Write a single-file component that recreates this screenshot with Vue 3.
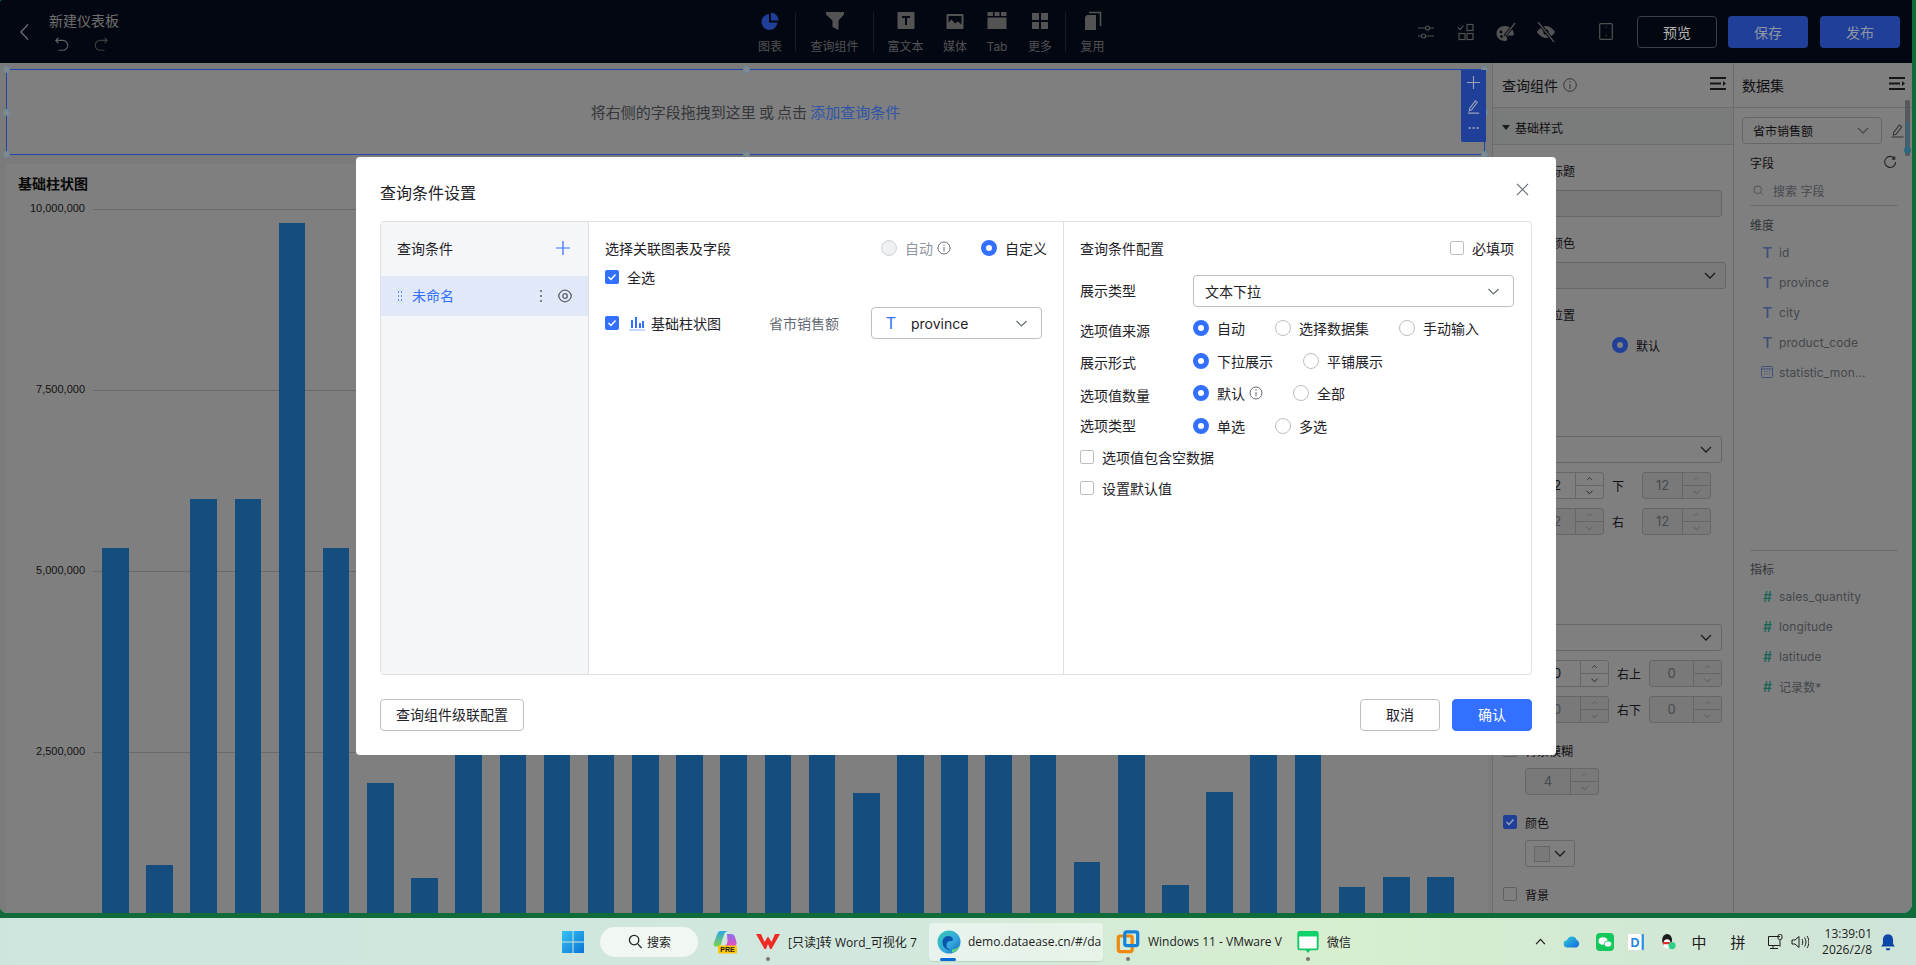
<script setup>
const bars = [385.5, 68, 434, 434, 710, 385.5, 150, 55, 300, 320, 300, 320, 300, 320, 300, 320, 300, 140, 320, 300, 320, 300, 71, 320, 48, 141, 320, 320, 46, 56, 56]
const axis = ['10,000,000', '7,500,000', '5,000,000', '2,500,000']
const handles = ['tl', 'tc', 'tr', 'ml', 'mr', 'bl', 'bc', 'br']
const dims = ['id', 'province', 'city', 'product_code']
const measures = ['sales_quantity', 'longitude', 'latitude', '记录数*']
const options = [
  { label: '选项值来源', cls: 'r1', lab: 'l3', items: [{ t: '自动', on: true }, { t: '选择数据集' }, { t: '手动输入' }] },
  { label: '展示形式', cls: 'r2', lab: 'l2', items: [{ t: '下拉展示', on: true }, { t: '平铺展示' }] },
  { label: '选项值数量', cls: 'r3', lab: 'l3', items: [{ t: '默认', on: true, info: true }, { t: '全部' }] },
  { label: '选项类型', cls: 'r4', lab: 'l0', items: [{ t: '单选', on: true }, { t: '多选' }] }
]
const marginRows = [
  { a: '上', av: '12', b: '下', bv: '12', active: true },
  { a: '左', av: '12', b: '右', bv: '12', active: false }
]
const cornerRows = [
  { a: '左上', av: '0', b: '右上', bv: '0', active: true },
  { a: '左下', av: '0', b: '右下', bv: '0', active: false }
]
</script>

<template>
  <div class="screen">
    <div class="window">
      <div class="frame">
        <header class="topbar">
          <div class="top-left">
            <svg class="back" viewBox="0 0 12 20"><path d="M10 1.5 2 10l8 8.5" /></svg>
            <div class="title-block">
              <div class="doc-title">新建仪表板</div>
              <div class="history">
                <svg viewBox="0 0 18 18"><path d="M5 2 2 5l3 3M2.5 5H10a5 5 0 0 1 0 11H5" /></svg>
                <svg class="faint" viewBox="0 0 18 18"><path d="M13 2l3 3-3 3M15.5 5H8a5 5 0 0 0 0 11h5" /></svg>
              </div>
            </div>
          </div>
          <nav class="tools">
            <div class="tool t1">
              <svg class="tool-ico" viewBox="0 0 20 20"><path class="pie-a" d="M9 3a8 8 0 1 0 8.500 8.500H9z" /><path class="pie-a" d="M11 1.500a8 8 0 0 1 7.500 8H11z" /></svg>
              <span>图表</span>
            </div>
            <div class="tool t2 sep">
              <svg class="tool-ico" viewBox="0 0 20 20"><path class="fill" d="M1 1h18v2.500l-5.500 6V19L7.500 16V9.500L1 3.500z" /></svg>
              <span>查询组件</span>
            </div>
            <div class="tool t3 sep">
              <svg class="tool-ico" viewBox="0 0 20 20"><rect class="fill" x="1.500" y="1" width="17" height="17" rx="1" /><path class="cut" d="M6 6h8M10 6v8" /></svg>
              <span>富文本</span>
            </div>
            <div class="tool t4">
              <svg class="tool-ico" viewBox="0 0 20 20"><rect class="fill" x="1.500" y="3" width="17" height="15" rx="1" /><path class="cut-fill" d="M3.500 5h13v8.500l-3.500-3-3 2-3.500-4-3 3z" /></svg>
              <span>媒体</span>
            </div>
            <div class="tool t5">
              <svg class="tool-ico" viewBox="0 0 20 20"><path class="fill" d="M.5 1h5.500v4H.5zM7.500 1h5v4h-5zM14 1h5.500v4H14zM.5 6.500h19V18H.5z" /></svg>
              <span>Tab</span>
            </div>
            <div class="tool t6">
              <svg class="tool-ico" viewBox="0 0 20 20"><rect class="fill" x="2" y="2" width="7" height="7" /><rect class="fill" x="11" y="2" width="7" height="7" /><rect class="fill" x="2" y="11" width="7" height="7" /><rect class="fill" x="11" y="11" width="7" height="7" /></svg>
              <span>更多</span>
            </div>
            <div class="tool t7 sep">
              <svg class="tool-ico" viewBox="0 0 20 20"><path class="fill" d="M2 6l2-2h9v15H2z" /><path class="line" d="M6 1.500h11.500V15" /></svg>
              <span>复用</span>
            </div>
          </nav>
          <div class="top-right">
            <svg class="ri" viewBox="0 0 20 20"><path d="M2 6h7.500M13.500 6H18M2 14h3.500M9.500 14H18" /><circle cx="11.500" cy="6" r="2" /><circle cx="7.500" cy="14" r="2" /></svg>
            <svg class="ri" viewBox="0 0 20 20"><path d="m2 5.500 2.200 2.200 3.300-4.200" /><rect x="11" y="2.500" width="6" height="6" /><rect x="3" y="11.500" width="6" height="6" /><rect x="11" y="11.500" width="6" height="6" /></svg>
            <svg class="ri" viewBox="0 0 20 20"><path class="fill" d="M9 4C4 4 .5 7 .5 11.500S4.500 19 9 19c2.500 0 2.500-1.800 2-3-.5-1.500.5-2.500 2.500-2.500h4C19 8.500 14 4 9 4z" /><circle class="hole" cx="5" cy="10" r="1.400" /><circle class="hole" cx="5.500" cy="14.500" r="1.400" /><path class="hole-line" d="M9 14 17.500 3" /><path class="brush" d="M9.500 13.500 19 1" /></svg>
            <svg class="ri" viewBox="0 0 20 20"><path class="fill" d="M1 10s3.500-6 9-6 9 6 9 6-3.500 6-9 6-9-6-9-6z" /><circle class="hole" cx="10" cy="10" r="2.600" /><path class="hole-line" d="M3 1 17 19" /><path class="brush" d="M2 0 18 20" /></svg>
            <svg class="ri phone" viewBox="0 0 14 17"><rect x=".7" y=".7" width="12.600" height="15.600" rx="1" /><path d="M7 3.500v1M7 12v1" /></svg>
            <button class="btn-preview">预览</button>
            <button class="btn-blue save">保存</button>
            <button class="btn-blue publish">发布</button>
          </div>
        </header>

        <main class="workspace">
          <section class="canvas">
            <div class="query-box">
              <span class="hint">将右侧的字段拖拽到这里 或 点击 <a class="link">添加查询条件</a></span>
              <i v-for="h in handles" :key="h" class="handle" :class="h"></i>
              <div class="box-actions">
                <svg viewBox="0 0 16 16"><path d="M8 1v14M1 8h14" /></svg>
                <svg viewBox="0 0 16 16"><path d="m4 10 6-8 2 1.500-6 8-2.500 1zM2 15h12" /></svg>
                <span class="dots">···</span>
              </div>
            </div>
            <article class="chart-card">
              <h3>基础柱状图</h3>
              <div class="chart-body">
                <div class="y-axis">
                  <div v-for="a in axis" :key="a" class="y-label">{{ a }}</div>
                </div>
                <div class="plot">
                  <div v-for="(b, i) in bars" :key="i" class="bar" :style="{ height: b + 'px' }"></div>
                </div>
              </div>
            </article>
          </section>

          <aside class="style-panel">
            <div class="panel-head">
              <span class="panel-title">查询组件</span>
              <svg class="info big" viewBox="0 0 14 14"><circle cx="7" cy="7" r="6.300" /><path d="M7 6v5M7 3.200v1.300" /></svg>
              <svg class="menu" viewBox="0 0 16 13"><path d="M0 1h16M0 6.500h11M0 12h16" /><path class="tri" d="m13 4 3 2.500L13 9z" /></svg>
            </div>
            <div class="band"><i class="caret"></i>基础样式</div>
            <div class="field-label m1">查询组件标题</div>
            <div class="text-input"></div>
            <div class="field-label m2">组件标题颜色</div>
            <div class="select-box wide"><svg class="chev" viewBox="0 0 12 7"><path d="m1 1 5 5 5-5" /></svg></div>
            <div class="field-label m2">组件标题位置</div>
            <div class="side-radio"><i class="radio on"></i><span>默认</span></div>
            <div class="select-box m3"><svg class="chev" viewBox="0 0 12 7"><path d="m1 1 5 5 5-5" /></svg></div>
            <div v-for="r in marginRows" :key="r.a" class="num-row">
              <span class="nl first">{{ r.a }}</span>
              <div class="num n-a" :class="{ disabled: !r.active }">
                <span class="nv">{{ r.av }}</span>
                <span class="spin"><svg viewBox="0 0 10 6"><path d="m1 5 4-4 4 4" /></svg><svg viewBox="0 0 10 6"><path d="m1 1 4 4 4-4" /></svg></span>
              </div>
              <span class="nl second">{{ r.b }}</span>
              <div class="num n-b disabled">
                <span class="nv">{{ r.bv }}</span>
                <span class="spin"><svg viewBox="0 0 10 6"><path d="m1 5 4-4 4 4" /></svg><svg viewBox="0 0 10 6"><path d="m1 1 4 4 4-4" /></svg></span>
              </div>
            </div>
            <div class="select-box m4"><svg class="chev" viewBox="0 0 12 7"><path d="m1 1 5 5 5-5" /></svg></div>
            <div v-for="r in cornerRows" :key="r.a" class="num-row">
              <span class="nl first">{{ r.a }}</span>
              <div class="num n-c" :class="{ disabled: !r.active }">
                <span class="nv">{{ r.av }}</span>
                <span class="spin"><svg viewBox="0 0 10 6"><path d="m1 5 4-4 4 4" /></svg><svg viewBox="0 0 10 6"><path d="m1 1 4 4 4-4" /></svg></span>
              </div>
              <span class="nl second2">{{ r.b }}</span>
              <div class="num n-d disabled">
                <span class="nv">{{ r.bv }}</span>
                <span class="spin"><svg viewBox="0 0 10 6"><path d="m1 5 4-4 4 4" /></svg><svg viewBox="0 0 10 6"><path d="m1 1 4 4 4-4" /></svg></span>
              </div>
            </div>
            <label class="check-row"><i class="check"></i>背景模糊</label>
            <div class="num n-e disabled">
              <span class="nv">4</span>
              <span class="spin"><svg viewBox="0 0 10 6"><path d="m1 5 4-4 4 4" /></svg><svg viewBox="0 0 10 6"><path d="m1 1 4 4 4-4" /></svg></span>
            </div>
            <label class="check-row"><i class="check on"><svg viewBox="0 0 14 14"><path d="m3.500 7 2.500 2.500 4.500-5" /></svg></i>颜色</label>
            <div class="picker"><i class="swatch"></i><svg class="chev" viewBox="0 0 12 7"><path d="m1 1 5 5 5-5" /></svg></div>
            <label class="check-row"><i class="check"></i>背景</label>
          </aside>

          <aside class="data-panel">
            <div class="panel-head">
              <span class="panel-title">数据集</span>
              <svg class="menu" viewBox="0 0 16 13"><path d="M0 1h16M0 6.500h11M0 12h16" /><path class="tri" d="m13 4 3 2.500L13 9z" /></svg>
            </div>
            <div class="ds-row">
              <div class="ds-select">省市销售额<svg class="chev lite" viewBox="0 0 12 7"><path d="m1 1 5 5 5-5" /></svg></div>
              <svg class="pencil" viewBox="0 0 16 16"><path d="m4 10 6-8 2.500 2-6 8-3 .8zM1.500 15h13" /></svg>
            </div>
            <div class="fields-head">字段<svg class="refresh" viewBox="0 0 16 16"><path d="M13.500 4.500A6.300 6.300 0 1 0 14.500 8" /><path class="tri" d="M14 1v4.500H9.500z" /></svg></div>
            <div class="search"><svg viewBox="0 0 14 14"><circle cx="6" cy="6" r="4.800" /><path d="m9.500 9.500 3 3" /></svg>搜索 字段</div>
            <div class="rule"></div>
            <div class="group g1">维度</div>
            <ul class="field-list">
              <li v-for="d in dims" :key="d"><b class="tic">T</b><span>{{ d }}</span></li>
              <li>
                <svg class="cal" viewBox="0 0 12 12"><rect x=".5" y=".5" width="11" height="11" rx="1" /><path d="M.5 3h11M3 5.500h1M5.500 5.500h1M8 5.500h1M3 8h1M5.500 8h1M8 8h1" /></svg>
                <span>statistic_mon...</span>
              </li>
            </ul>
            <div class="rule r2"></div>
            <div class="group g2">指标</div>
            <ul class="field-list">
              <li v-for="m in measures" :key="m"><b class="hash">#</b><span>{{ m }}</span></li>
            </ul>
            <svg class="slider" viewBox="0 0 8 60"><rect x="1" y="0" width="5" height="56" rx="2" /><path d="M3.500 22v28" /><circle cx="3.500" cy="50" r="3.500" /></svg>
          </aside>
        </main>

        <div class="mask">
          <section class="modal">
            <header class="modal-head">
              <h2>查询条件设置</h2>
              <svg class="close" viewBox="0 0 14 14"><path d="m1 1 12 12M13 1 1 13" /></svg>
            </header>
            <div class="modal-body">
              <div class="col-left">
                <div class="col-left-head">查询条件<svg class="plus" viewBox="0 0 14 14"><path d="M7 0v14M0 7h14" /></svg></div>
                <div class="cond active">
                  <svg class="drag" viewBox="0 0 6 10"><path d="M1 1h1M4 1h1M1 5h1M4 5h1M1 9h1M4 9h1" /></svg>
                  <span>未命名</span>
                  <svg class="kebab" viewBox="0 0 4 14"><circle cx="2" cy="2" r="1" /><circle cx="2" cy="7" r="1" /><circle cx="2" cy="12" r="1" /></svg>
                  <svg class="eye" viewBox="0 0 14 14"><path d="M7 1.200c3 0 6 2.500 6.300 5.800-.3 3.300-3.300 5.800-6.300 5.800S1 10.300.7 7C1 3.700 4 1.200 7 1.200z" /><circle cx="7" cy="7" r="2.300" /></svg>
                </div>
              </div>
              <div class="col-mid">
                <div class="mid-head">
                  <span>选择关联图表及字段</span>
                  <div class="mid-radios">
                    <span class="opt muted"><i class="radio off"></i>自动<svg class="info" viewBox="0 0 14 14"><circle cx="7" cy="7" r="6" /><path d="M7 6v4.500M7 3.500v1.300" /></svg></span>
                    <span class="opt"><i class="radio on"></i>自定义</span>
                  </div>
                </div>
                <label class="mid-all"><i class="check on"><svg viewBox="0 0 14 14"><path d="m3.500 7 2.500 2.500 4.500-5" /></svg></i>全选</label>
                <div class="mid-row">
                  <i class="check on"><svg viewBox="0 0 14 14"><path d="m3.500 7 2.500 2.500 4.500-5" /></svg></i>
                  <svg class="bar-ico" viewBox="0 0 18 16"><path d="M4 5v8M8 2v11M12 8v5M15 6v7" /><path class="base" d="M1 15h16" /></svg>
                  <span class="chart-name">基础柱状图</span>
                  <span class="ds-name">省市销售额</span>
                  <div class="field-select"><b>T</b><span>province</span><svg class="chev lite2" viewBox="0 0 12 7"><path d="m1 1 5 5 5-5" /></svg></div>
                </div>
              </div>
              <div class="col-right">
                <div class="right-head">
                  <span>查询条件配置</span>
                  <label class="req"><i class="check"></i>必填项</label>
                </div>
                <div class="type-row">
                  <span class="lbl">展示类型</span>
                  <div class="type-select">文本下拉<svg class="chev lite2" viewBox="0 0 12 7"><path d="m1 1 5 5 5-5" /></svg></div>
                </div>
                <div v-for="o in options" :key="o.label" class="opt-row" :class="o.cls">
                  <span class="lbl" :class="o.lab">{{ o.label }}</span>
                  <div class="opt-list">
                    <span v-for="it in o.items" :key="it.t" class="opt">
                      <i class="radio" :class="{ on: it.on }"></i>{{ it.t }}
                      <svg v-if="it.info" class="info" viewBox="0 0 14 14"><circle cx="7" cy="7" r="6" /><path d="M7 6v4.500M7 3.500v1.300" /></svg>
                    </span>
                  </div>
                </div>
                <label class="cb-row"><i class="check"></i>选项值包含空数据</label>
                <label class="cb-row"><i class="check"></i>设置默认值</label>
              </div>
            </div>
            <footer class="modal-foot">
              <button class="btn">查询组件级联配置</button>
              <div class="foot-right">
                <button class="btn wide-btn">取消</button>
                <button class="btn primary wide-btn">确认</button>
              </div>
            </footer>
          </section>
        </div>
      </div>
    </div>

    <footer class="taskbar">
      <svg class="app win" viewBox="0 0 24 24">
        <defs><linearGradient id="wing" x1="0" y1="0" x2="1" y2="1"><stop offset="0" stop-color="#35c4f5" /><stop offset="1" stop-color="#0a74d6" /></linearGradient></defs>
        <path fill="url(#wing)" d="M1 1h10.500v10.500H1zM12.500 1H23v10.500H12.500zM1 12.500h10.500V23H1zM12.500 12.500H23V23H12.500z" />
      </svg>
      <div class="tb-search">
        <svg viewBox="0 0 16 16"><circle cx="6.500" cy="6.500" r="5" /><path d="m10.500 10.500 4 4.500" /></svg>
        <span>搜索</span>
      </div>
      <svg class="app copilot" viewBox="0 0 24 24">
        <defs>
          <linearGradient id="copa" x1="0" y1="0" x2="0" y2="1"><stop offset="0" stop-color="#2aa6e8" /><stop offset="1" stop-color="#7fd24a" /></linearGradient>
          <linearGradient id="copb" x1="0" y1="0" x2="0" y2="1"><stop offset="0" stop-color="#8a6ff0" /><stop offset="1" stop-color="#e84fb8" /></linearGradient>
        </defs>
        <path fill="url(#copa)" d="M8 1h7c-2.500.5-3.500 2-4.500 5L8 14c-.7 2-1.800 2.500-3.500 2.500H2.500C1 16.500.3 15 .7 13.500L4 4.500C4.800 2 6 1 8 1z" />
        <path fill="url(#copb)" d="M14 4h4c2 0 3.500 1 4.200 3.500l1.300 5c.5 1.800-.5 3.500-2.500 3.500h-9c1.500-1 2-2.500 2.500-4.500z" />
        <rect x="5" y="15.500" width="19" height="8" rx="1.500" fill="#fdc60a" />
        <text x="14.500" y="22" text-anchor="middle" class="pre">PRE</text>
      </svg>
      <div class="task wps has-dot">
        <svg class="app" viewBox="0 -4 24 24"><path d="M0 0h5l3.500 8L12 2.500 15.500 8 19 0h5l-8.500 15H14l-2-5-2 5H8.500zM5.500 3.500" fill="#ee2a24" /></svg>
        <span>[只读]转 Word_可视化 7</span>
      </div>
      <div class="task edge active-tab">
        <svg class="app" viewBox="0 0 24 24">
          <defs>
            <linearGradient id="edg" x1="0" y1="0" x2="1" y2="1"><stop offset="0" stop-color="#36c9b0" /><stop offset=".6" stop-color="#35a7e0" /><stop offset="1" stop-color="#0d5fb8" /></linearGradient>
          </defs>
          <circle cx="12" cy="12" r="11.500" fill="url(#edg)" />
          <path d="M16 10c0-2.500-2-4-5-4-3.500 0-5.500 3-5.500 6.500 0 4.500 4 8 8.500 7.500-3-.5-5-3-4.500-5.500.5-2 2-3.500 3.500-3.500 1.500 0 3-.3 3-1z" fill="#0c55ad" />
          <path d="M15 22.500c4-.5 7-4 8-8-1.500 3-4.500 5-8 5z" fill="#5fdc7a" />
        </svg>
        <span>demo.dataease.cn/#/da</span>
        <i class="underline"></i>
      </div>
      <div class="task vm has-dot">
        <svg class="app" viewBox="0 0 24 26"><rect x="1.500" y="6.500" width="15" height="17" rx="2" fill="none" stroke="#ee8a12" stroke-width="3.500" /><rect x="8.500" y="2" width="14" height="15" rx="2" fill="none" stroke="#1584d8" stroke-width="3.500" /></svg>
        <span>Windows 11 - VMware V</span>
      </div>
      <div class="task wx has-dot">
        <svg class="app" viewBox="0 0 24 26"><rect x="1.500" y="2" width="21" height="19" rx="1.500" fill="#fff" stroke="#10c866" stroke-width="2" /><path d="M1 2h22v5H1z" fill="#10d46b" /><path d="m9 21 3 4 3-4z" fill="#10c866" /></svg>
        <span>微信</span>
      </div>
      <div class="tray">
        <svg class="t-chev" viewBox="0 0 12 8"><path d="m1 7 5-5.500L11 7" /></svg>
        <svg class="t-ico" viewBox="0 0 20 14">
          <defs><linearGradient id="cld" x1="0" y1="0" x2="1" y2="1"><stop offset="0" stop-color="#2fd0d8" /><stop offset="1" stop-color="#1466dd" /></linearGradient></defs>
          <path fill="url(#cld)" d="M5 13a4 4 0 0 1-.5-8A5.500 5.500 0 0 1 15 4.500 4.500 4.500 0 0 1 15 13z" />
        </svg>
        <svg class="t-ico" viewBox="0 0 18 18"><rect width="18" height="18" rx="4" fill="#12c85b" /><ellipse cx="7" cy="8" rx="4.500" ry="3.700" fill="#fff" /><ellipse cx="12" cy="11" rx="3.800" ry="3.100" fill="#fff" stroke="#12c85b" stroke-width=".8" /></svg>
        <svg class="t-ico" viewBox="0 0 16 16"><rect x="1" y="1" width="14" height="14" fill="#fff" /><path d="M13 1h2v14h-2z" fill="#2a8be6" /><text x="7" y="12" text-anchor="middle" class="ding">D</text></svg>
        <svg class="t-ico" viewBox="0 0 18 20"><ellipse cx="8" cy="8" rx="5.500" ry="7" fill="#1c1c1c" /><ellipse cx="8" cy="12" rx="4" ry="5" fill="#fff" /><path d="M3 10h10l-1 2.500H4z" fill="#e22b2b" /><circle cx="13.500" cy="14" r="4" fill="#2fd08a" /></svg>
        <span class="ime">中</span>
        <span class="ime">拼</span>
        <svg class="t-ico net" viewBox="0 0 18 17"><path d="M13 3H1.500v9h11M6 12v3M3 15h8" /><rect x="11" y="1" width="4" height="5" rx="1.500" /><path d="M13 6v7" /></svg>
        <svg class="t-ico net" viewBox="0 0 18 14"><path d="M1 5h3l4-3.500v11L4 9H1zM11 4c1 1.500 1 4.500 0 6M13.500 2.500c2 2.500 2 6.500 0 9M16 1c2.500 3.500 2.500 8.500 0 12" /></svg>
        <div class="clock"><div>13:39:01</div><div>2026/2/8</div></div>
        <svg class="t-ico" viewBox="0 0 14 16"><path d="M7 1c-3 0-4.500 2.500-4.500 5v3.500L1 12h12l-1.500-2.500V6C11.500 3.500 10 1 7 1z" fill="#0d47a8" /><path d="M5 13.500a2 2 0 0 0 4 0z" fill="#0d47a8" /></svg>
      </div>
    </footer>
  </div>
</template>

<style>
html, body { margin: 0; overflow: hidden; background: #cfe6dc; }
</style>

<style scoped>
* { box-sizing: border-box; }
.screen {
  width: 1916px; height: 965px; display: flex; flex-direction: column; overflow: hidden;
  font-family: Inter, "Noto Sans CJK SC", sans-serif; font-size: 14px; color: #1f2329;
}
i { display: block; font-style: normal; flex: none; }
svg { display: block; flex: none; }
ul { list-style: none; margin: 0; padding: 0; }
button { font: inherit; cursor: pointer; }

.window { height: 918px; background: #0f6b3a; padding: 0 4px 5px 0; flex: none; }
.frame {
  position: relative; width: 1912px; height: 913px; overflow: hidden;
  border-radius: 3px 0 9px 7px; display: flex; flex-direction: column;
}

/* top bar */
.topbar { height: 63px; flex: none; background: #060e22; display: flex; align-items: center; color: #e6e6e6; }
.top-left { width: 745px; display: flex; align-items: center; padding-left: 19px; flex: none; }
.back { width: 11px; height: 18px; margin-right: 19px; fill: none; stroke: #e8e8e8; stroke-width: 1.4; }
.doc-title { font-size: 14px; line-height: 20px; margin-top: -1px; color: #dcdcdc; }
.history { display: flex; gap: 23px; margin-top: 5px; margin-left: 5px; }
.history svg { width: 16px; height: 16px; fill: none; stroke: #c0c0c0; stroke-width: 1.3; }
.history svg.faint { stroke: #7a7a7a; }
.tools { display: flex; height: 40px; flex: none; }
.tool { height: 40px; display: flex; flex-direction: column; align-items: center; font-size: 12px; line-height: 14px; color: #a0a0a6; }
.tool-ico { width: 20px; height: 20px; margin: -1px 0 9px; }
.tool.sep { border-left: 1px solid #323a4e; }
.t1 { width: 50px; } .t2 { width: 78px; } .t3 { width: 64px; } .t4 { width: 36px; }
.t5 { width: 48px; } .t6 { width: 44px; padding-right: 6px; } .t7 { width: 54px; }
.t1 .tool-ico { position: relative; z-index: 1; }
.pie-a { fill: #1f3f98; }
.fill { fill: #a6a6a6; stroke: none; }
.cut { stroke: #060e22; stroke-width: 2; fill: none; }
.cut-fill { fill: #060e22; }
.line { stroke: #a6a6a6; stroke-width: 1.6; fill: none; }
.top-right { display: flex; align-items: center; margin-left: auto; }
.ri { width: 20px; height: 20px; margin-right: 20px; fill: none; stroke: #a0a0a0; stroke-width: 1.2; }
.ri .fill { stroke: none; }
.ri .hole { fill: #060e22; stroke: none; }
.ri .hole-line { stroke: #060e22; stroke-width: 3.200; }
.ri .brush { stroke-width: 1.300; }
.ri.phone { width: 14px; height: 17px; margin: 0 24px 0 23px; }
.btn-preview, .btn-blue { width: 80px; height: 32px; border-radius: 4px; font-size: 14px; position: relative; z-index: 1; }
.btn-preview { background: #03070f; border: 1px solid #3a3f48; color: #b4b4b4; margin-right: 11px; }
.btn-blue { background: #1f3f98; border: 0; color: #8f95a5; }
.save { margin-right: 12px; }
.publish { margin-right: 12px; }

/* workspace */
.workspace { flex: 1; display: flex; min-height: 0; }
.canvas { width: 1492px; flex: none; background: #f6f7f8; padding: 6px 0 0 6px; overflow: hidden; }
.query-box {
  position: relative; width: 1479px; height: 86px; background: #fff; border: 1px solid transparent; padding-bottom: 2px;
  display: flex; align-items: center; justify-content: center; font-size: 15px; color: #6a6e76;
}
.query-box::before { content: ""; position: absolute; inset: -1px; border: 1px solid #2246a6; z-index: 1; pointer-events: none; }
.hint { word-spacing: -1px; }
.link { color: #2f55a8; position: relative; z-index: 1; }
.handle { position: absolute; width: 7px; height: 7px; border-radius: 50%; border: 1px solid #5e8fa8; background: #888; z-index: 1; }
.tl { left: -4px; top: -4px; } .tc { left: 736px; top: -4px; } .tr { right: -4px; top: -4px; }
.ml { left: -4px; top: 39px; } .mr { right: -4px; top: 39px; }
.bl { left: -4px; bottom: -4px; } .bc { left: 736px; bottom: -4px; } .br { right: -4px; bottom: -4px; }
.box-actions {
  position: absolute; top: 0; right: -2px; width: 25px; height: 72px; background: #1f3f98; border-radius: 0 0 0 2px; z-index: 2;
  display: flex; flex-direction: column; align-items: center; padding-top: 5px; gap: 9px; color: #9aa2b8;
}
.box-actions svg { width: 15px; height: 15px; fill: none; stroke: #9aa2b8; stroke-width: 1.2; }
.dots { font-size: 12px; line-height: 10px; letter-spacing: 0; font-weight: 700; }

.chart-card { margin-top: 9px; width: 1482px; height: 780px; background: #fff; padding: 12px 0 0 12px; overflow: hidden; }
.chart-card h3 { margin: 0; font-size: 14px; line-height: 16px; font-weight: 700; color: #111; }
.chart-body { display: flex; margin: 17px 0 0 -12px; }
.y-axis { width: 87px; flex: none; margin-top: -1px; }
.y-label { height: 181px; text-align: right; padding-right: 8px; font: 11px/0 "Liberation Sans", sans-serif; color: #2a2a2a; }
.plot {
  width: 1375px; height: 724px; display: flex; align-items: flex-end; gap: 17.58px; padding-left: 9px;
  background: repeating-linear-gradient(to bottom, #d4d4d4 0, #d4d4d4 1px, transparent 1px, transparent 181px);
}
.bar { width: 26.6px; flex: none; background: #2c9bff; }

/* side panels */
.style-panel { width: 241px; flex: none; background: #fff; border-left: 1px solid #d8d8d8; overflow: hidden; font-size: 12px; }
.panel-head { height: 45px; display: flex; align-items: center; border-bottom: 1px solid #d6d8da; position: relative; }
.panel-title { font-size: 14px; margin-left: 9px; }
.info { width: 14px; height: 14px; fill: none; stroke: #646a73; stroke-width: 1; margin-left: 4px; }
.info.big { margin-left: 5px; }
.menu { position: absolute; right: 7px; top: 14px; width: 16px; height: 13px; fill: none; stroke: #2a2d32; stroke-width: 2; }
.menu .tri { fill: #2a2d32; stroke: none; }
.band { height: 37px; background: #f5f6f7; border-bottom: 1px solid #d6d8da; display: flex; align-items: center; padding: 2px 0 0 9px; font-size: 12px; }
.caret { width: 0; height: 0; border: 4px solid transparent; border-top: 5px solid #33363a; border-bottom: 0; margin-right: 5px; }
.field-label { margin-left: 10px; line-height: 18px; }
.m1 { margin-top: 18px; }
.m2 { margin-top: 18px; }
.text-input { width: 229px; height: 27px; margin: 9px 0 0 0; background: #f0f1f1; border: 1px solid #c9cccf; border-radius: 3px; }
.select-box { width: 229px; height: 27px; margin-top: 9px; border: 1px solid #c9cccf; border-radius: 3px; display: flex; align-items: center; justify-content: flex-end; padding-right: 9px; }
.select-box.wide { width: 233px; padding-right: 9px; background: #f5f5f5; }
.m3 { margin-top: 83px; }
.m4 { margin-top: 89px; }
.chev { width: 12px; height: 7px; fill: none; stroke: #33363a; stroke-width: 1.3; }
.chev.lite { stroke: #8f959e; margin-left: auto; }
.chev.lite2 { stroke: #646a73; stroke-width: 1.1; width: 13px; }
.side-radio { display: flex; align-items: center; gap: 8px; height: 16px; margin: 12px 0 0 119px; }
.side-radio .radio.on { position: relative; z-index: 1; border-color: #1f3f98; background: #808080; }

.num-row { display: flex; align-items: center; height: 27px; margin-top: 9px; }
.nl.first { margin-left: 10px; width: 30px; flex: none; }
.nl.second { margin-left: 8px; width: 30px; flex: none; }
.nl.second2 { margin-left: 8px; width: 32px; flex: none; }
.num { height: 27px; display: flex; border: 1px solid #c9cccf; border-radius: 3px; background: #fff; flex: none; color: #1f2329; }
.num .nv { flex: 1; text-align: center; font-size: 13px; line-height: 25px; }
.spin { width: 28px; border-left: 1px solid #c9cccf; display: flex; flex-direction: column; flex: none; }
.spin svg { width: 100%; height: 50%; padding: 4px 9px; fill: none; stroke: #33363a; stroke-width: 1.2; }
.spin svg:first-child { border-bottom: 1px solid #c9cccf; }
.num.disabled { background: #f2f3f3; color: #8f959e; }
.num.disabled .spin svg { stroke: #a8abaf; }
.n-a { width: 71px; margin-right: 0; }
.n-b { width: 69px; }
.n-c { width: 76px; margin-left: 0; }
.n-d { width: 73px; }
.check-row { display: flex; align-items: center; gap: 8px; height: 18px; margin: 18px 0 0 10px; }
.check-row .check.on { position: relative; z-index: 1; background: #1f3f98; }
.check-row .check.on svg { stroke: #9aa2b8; }
.n-e { width: 74px; margin: 9px 0 0 32px; }
.picker { width: 50px; height: 27px; margin: 9px 0 0 32px; border: 1px solid #c9cccf; border-radius: 3px; display: flex; align-items: center; padding-left: 8px; gap: 4px; }
.swatch { width: 16px; height: 16px; border: 1px solid #c9cccf; background: #f2f2f2; }

.data-panel { width: 179px; flex: none; background: #fff; border-left: 1px solid #d8d8d8; position: relative; font-size: 12px; overflow: hidden; }
.data-panel .panel-title { margin-left: 8px; }
.data-panel .menu { right: 7px; }
.ds-row { display: flex; align-items: center; margin: 9px 0 0 8px; }
.ds-select { width: 140px; height: 27px; border: 1px solid #c9cccf; border-radius: 4px; display: flex; align-items: center; padding: 0 12px 0 10px; }
.pencil { width: 15px; height: 15px; margin-left: 8px; fill: none; stroke: #60646c; stroke-width: 1.1; }
.fields-head { display: flex; align-items: center; justify-content: space-between; height: 18px; margin: 9px 15px 0 16px; }
.refresh { width: 14px; height: 14px; fill: none; stroke: #4a4d52; stroke-width: 1.3; }
.refresh .tri { fill: #4a4d52; stroke: none; }
.search { display: flex; align-items: center; gap: 9px; height: 20px; margin: 9px 0 0 19px; color: #8f959e; }
.search svg { width: 11px; height: 11px; fill: none; stroke: #8f959e; stroke-width: 1.1; }
.rule { height: 1px; background: #d8d8d8; margin: 5px 14px 0 16px; }
.rule.r2 { margin-top: 163px; }
.group { margin-left: 16px; height: 18px; line-height: 18px; color: #646a73; }
.g1 { margin-top: 11px; }
.g2 { margin-top: 10px; }
.field-list { margin-top: 2px; }
.field-list li { height: 30px; display: flex; align-items: center; padding-left: 28px; color: #8a8f98; letter-spacing: .1px; white-space: nowrap; }
.field-list li span { margin-left: 6px; }
.tic { width: 11px; font-size: 15px; font-weight: 500; color: #7fa0f5; text-align: center; }
.hash { width: 11px; font-size: 14px; font-weight: 500; color: #30c8b0; text-align: center; }
.cal { width: 12px; height: 12px; margin-left: -1px; margin-right: 0; fill: none; stroke: #7fa0f5; stroke-width: 1; }
.slider { position: absolute; top: 37px; right: 0; width: 8px; height: 60px; }
.slider rect { fill: #aab2b8; }
.slider path { stroke: #58d0ff; stroke-width: 2; fill: none; }
.slider circle { fill: #58d0ff; }

/* mask + modal */
.mask { position: absolute; inset: 0; background: rgba(0, 0, 0, .5); padding: 157px 0 0 356px; }
.modal { position: relative; z-index: 3; width: 1200px; height: 598px; background: #fff; border-radius: 4px; padding: 0 24px; }
.modal-head { height: 64px; display: flex; align-items: center; justify-content: space-between; padding-top: 8px; }
.modal-head h2 { margin: 0; font-size: 16px; font-weight: 400; color: #1f2329; line-height: 24px; }
.close { width: 13px; height: 13px; margin-right: 3px; margin-top: -7px; fill: none; stroke: #646a73; stroke-width: 1.2; }
.modal-body { height: 454px; width: 1152px; border: 1px solid #dee0e3; border-radius: 4px; display: flex; overflow: hidden; }
.col-left { width: 208px; flex: none; background: #f5f6f7; border-right: 1px solid #dee0e3; }
.col-left-head { height: 54px; display: flex; align-items: center; justify-content: space-between; padding: 0 18px 2px 16px; }
.plus { width: 14px; height: 14px; fill: none; stroke: #3370ff; stroke-width: 1.2; }
.cond { height: 40px; display: flex; align-items: center; background: #e1e8f7; color: #3370ff; padding: 0 0 2px 16px; }
.drag { width: 6px; height: 10px; margin-right: 9px; stroke: #3370ff; stroke-width: 1.3; fill: none; margin-top: 2px; }
.cond span { flex: 1; }
.kebab { width: 4px; height: 14px; fill: #5a5f68; margin: 2px 15px 0 0; }
.eye { width: 14px; height: 14px; fill: none; stroke: #5a5f68; stroke-width: 1.3; margin: 2px 16px 0 0; }
.col-mid { width: 475px; flex: none; border-right: 1px solid #dee0e3; padding: 16px 16px 0 16px; }
.mid-head { display: flex; align-items: center; justify-content: space-between; height: 20px; }
.mid-radios { display: flex; gap: 30px; }
.opt { display: inline-flex; align-items: center; white-space: nowrap; height: 20px; }
.opt .radio { margin-right: 8px; }
.opt.muted { color: #8f959e; }
.radio { width: 16px; height: 16px; border-radius: 50%; border: 1px solid #bbbfc4; background: #fff; }
.radio.off { background: #eff0f1; border-color: #d0d3d6; }
.radio.on { border: 5.5px solid #3370ff; background: #fff; }
.check { width: 14px; height: 14px; border: 1px solid #bbbfc4; border-radius: 2px; background: #fff; }
.check.on { background: #3370ff; border: 0; }
.check svg { width: 14px; height: 14px; fill: none; stroke: #fff; stroke-width: 1.5; }
.mid-all { display: flex; align-items: center; gap: 8px; height: 20px; margin-top: 9px; }
.mid-row { display: flex; align-items: center; height: 32px; margin-top: 20px; }
.bar-ico { width: 18px; height: 16px; margin-left: 9px; fill: none; stroke: #3370ff; stroke-width: 2; }
.bar-ico .base { stroke: #b3ccff; stroke-width: 1.5; }
.chart-name { margin-left: 5px; width: 70px; white-space: nowrap; }
.ds-name { margin-left: 48px; width: 70px; color: #646a73; white-space: nowrap; }
.field-select { width: 171px; height: 32px; margin-left: 32px; border: 1px solid #bbbfc4; border-radius: 4px; display: flex; align-items: center; padding: 0 13px 0 12px; }
.field-select b { width: 14px; font-weight: 400; font-size: 16px; color: #3370ff; text-align: center; }
.field-select span { margin-left: 13px; flex: 1; }
.col-right { flex: 1; padding: 16px 17px 0 16px; }
.right-head { display: flex; justify-content: space-between; align-items: center; height: 20px; }
.req { display: flex; align-items: center; gap: 8px; }
.type-row { display: flex; align-items: center; margin-top: 17px; height: 32px; }
.lbl { width: 113px; flex: none; line-height: 20px; white-space: nowrap; }
.type-select { flex: 1; height: 32px; border: 1px solid #bbbfc4; border-radius: 4px; display: flex; align-items: center; justify-content: space-between; padding: 0 13px 0 11px; }
.opt-row { display: flex; align-items: flex-start; height: 20px; }
.r1 { margin-top: 11px; } .r2 { margin-top: 13px; } .r3 { margin-top: 12px; } .r4 { margin-top: 13px; }
.l3 { padding-top: 3px; } .l2 { padding-top: 2px; } .l0 { padding-top: 0; }
.opt-list { display: flex; gap: 30px; }
.cb-row { display: flex; align-items: center; gap: 8px; height: 20px; margin-top: 11px; }
.modal-foot { display: flex; justify-content: space-between; margin-top: 24px; }
.foot-right { display: flex; gap: 12px; }
.btn { height: 32px; padding: 0 15px 2px; border: 1px solid #bbbfc4; border-radius: 4px; background: #fff; color: #1f2329; font-size: 14px; }
.wide-btn { width: 80px; padding: 0 0 2px; }
.primary { background: #3370ff; border-color: #3370ff; color: #fff; }

/* taskbar */
.taskbar {
  flex: 1; display: flex; align-items: center; padding-left: 561px;
  background: linear-gradient(90deg, #cde5dd 0%, #d2e8de 45%, #d7eecf 70%, #cfe3d9 100%);
  font-family: "Open Sans", "Noto Sans CJK SC", sans-serif; font-size: 12px; color: #1c1c1c;
}
.app { width: 24px; height: 24px; }
.tb-search { width: 98px; height: 30px; margin-left: 15px; border-radius: 15px; background: #f1f8f4; display: flex; align-items: center; padding-left: 28px; gap: 4px; }
.tb-search svg { width: 15px; height: 15px; fill: none; stroke: #222; stroke-width: 1.4; }
.copilot { margin-left: 15px; }
.pre { font: 700 7px "Liberation Sans", sans-serif; fill: #222; }
.task { display: flex; align-items: center; position: relative; height: 38px; flex: none; }
.task span { white-space: nowrap; }
.wps { margin-left: 19px; width: 160px; gap: 8px; }
.edge { margin-left: 13px; width: 174px; padding-left: 8px; gap: 7px; background: rgba(255, 255, 255, .45); border-radius: 4px; box-shadow: 0 1px 1px rgba(0, 0, 0, .1); }
.vm { margin-left: 13px; width: 160px; gap: 8px; }
.wx { margin-left: 20px; gap: 7px; }
.has-dot::after { content: ""; position: absolute; left: 10px; bottom: 0; width: 4px; height: 4px; border-radius: 50%; background: #777; }
.underline { position: absolute; left: 11px; bottom: 0; width: 16px; height: 3px; border-radius: 2px; background: #0a6cd6; }
.tray {
  margin-left: auto; width: 391px; margin-right: 0; display: grid; align-items: center; justify-items: center;
  grid-template-columns: 30px 34px 32px 30px 34px 28px 50px 26px 22px 61px 32px;
}
.t-chev { width: 11px; height: 7px; fill: none; stroke: #1c1c1c; stroke-width: 1.4; }
.t-ico { width: 18px; height: 18px; }
.t-ico.net { fill: none; stroke: #1c1c1c; stroke-width: 1; }
.ding { font: 700 11px "Liberation Sans", sans-serif; fill: #1f84e0; }
.ime { font-size: 15px; font-family: "Noto Sans CJK SC", sans-serif; }
.clock { justify-self: end; text-align: right; line-height: 16px; white-space: nowrap; }
</style>
